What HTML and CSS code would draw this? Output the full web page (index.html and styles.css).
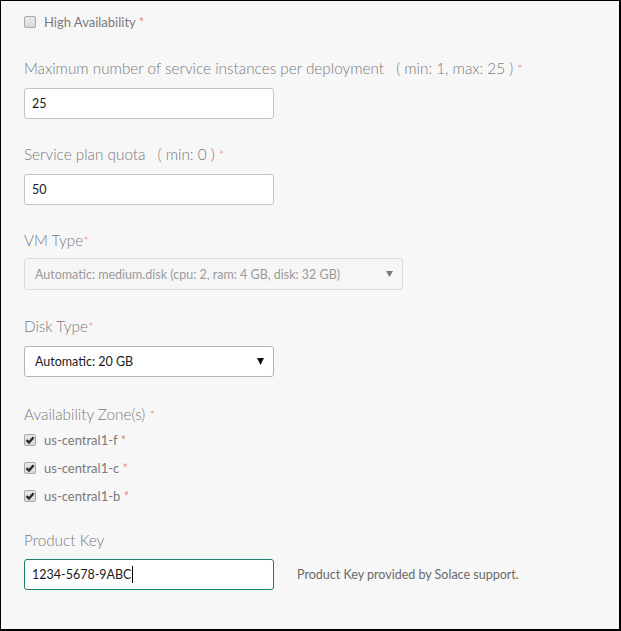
FILE: index.html
```html
<!DOCTYPE html>
<html>
<head>
<meta charset="utf-8">
<link rel="stylesheet" href="styles.css">
</head>
<body>
<div class="frame">
  <div class="check-row top">
    <span class="cb"></span>
    <span class="cb-label">High Availability <span class="req">*</span></span>
  </div>

  <div class="group g1">
    <div class="label">Maximum number of service instances per deployment <span class="hint">( min: 1, max: 25 )</span> <span class="req">*</span></div>
    <div class="input">25</div>
  </div>

  <div class="group">
    <div class="label">Service plan quota <span class="hint">( min: 0 )</span> <span class="req">*</span></div>
    <div class="input">50</div>
  </div>

  <div class="group vm">
    <div class="label">VM Type<span class="req">*</span></div>
    <div class="select disabled wide">
      <span>Automatic: medium.disk (cpu: 2, ram: 4 GB, disk: 32 GB)</span>
      <svg class="arrow" width="7" height="6" viewBox="0 0 7 6"><path d="M0 0H7L3.5 6Z" fill="#7a7a7a"/></svg>
    </div>
  </div>

  <div class="group disk">
    <div class="label">Disk Type<span class="req">*</span></div>
    <div class="select">
      <span>Automatic: 20 GB</span>
      <svg class="arrow" width="7" height="7" viewBox="0 0 7 7"><path d="M0 0H7L3.5 7Z" fill="#111"/></svg>
    </div>
  </div>

  <div class="group zones">
    <div class="label">Availability Zone(s) <span class="req">*</span></div>
    <div class="check-row">
      <span class="cb checked"><svg width="10" height="10" viewBox="0 0 10 10"><path d="M1.5 5.2L4 7.6L8.6 2.2" fill="none" stroke="#2b2b2b" stroke-width="2.4"/></svg></span>
      <span class="cb-label">us-central1-f <span class="req">*</span></span>
    </div>
    <div class="check-row">
      <span class="cb checked"><svg width="10" height="10" viewBox="0 0 10 10"><path d="M1.5 5.2L4 7.6L8.6 2.2" fill="none" stroke="#2b2b2b" stroke-width="2.4"/></svg></span>
      <span class="cb-label">us-central1-c <span class="req">*</span></span>
    </div>
    <div class="check-row">
      <span class="cb checked"><svg width="10" height="10" viewBox="0 0 10 10"><path d="M1.5 5.2L4 7.6L8.6 2.2" fill="none" stroke="#2b2b2b" stroke-width="2.4"/></svg></span>
      <span class="cb-label">us-central1-b <span class="req">*</span></span>
    </div>
  </div>

  <div class="group pk">
    <div class="label">Product Key</div>
    <div class="pk-row">
      <div class="input focused">1234-5678-9ABC<span class="caret"></span></div>
      <span class="help">Product Key provided by Solace support.</span>
    </div>
  </div>
</div>
</body>
</html>
```
FILE: styles.css
```css
html, body {
  margin: 0;
  padding: 0;
}
body {
  font-family: Lato, "Noto Sans", sans-serif;
  background: #fff;
}
.frame {
  box-sizing: border-box;
  width: 621px;
  height: 631px;
  background: #f7f7f7;
  border-style: solid;
  border-color: #000;
  border-width: 1px 2px 2px 1px;
  padding: 7px 0 0 23px;
}
.check-row {
  display: flex;
  align-items: center;
  height: 28px;
}
.cb {
  box-sizing: border-box;
  width: 12px;
  height: 12px;
  border: 1px solid #a9a9a9;
  border-radius: 2px;
  background: linear-gradient(#e9e9e9, #d9d9d9);
  display: flex;
  align-items: center;
  justify-content: center;
  flex: none;
}
.cb svg { display: block; }
.cb-label {
  margin-left: 8px;
  font-size: 13px;
  color: #7a7a7a;
}
.req {
  color: #f08a8a;
  font-size: 13px;
}
.group {
  margin-top: 25px;
}
.group.g1 {
  margin-top: 22px;
}
.label {
  font-size: 15.3px;
  line-height: 20px;
  font-weight: 300;
  color: #7a7a7a;
  margin-bottom: 9px;
  white-space: nowrap;
}
.hint {
  margin-left: 8px;
}
.vm .label {
  margin-bottom: 7px;
}
.group.disk {
  margin-top: 26px;
}
.input {
  box-sizing: border-box;
  width: 250px;
  height: 31px;
  background: #fff;
  border: 1px solid #c4c4c4;
  border-radius: 3px;
  padding: 0 7px;
  display: flex;
  align-items: center;
  font-size: 12.5px;
  color: #1a1a1a;
}
.select {
  box-sizing: border-box;
  width: 250px;
  height: 31px;
  background: #fff;
  border: 1px solid #b4b4b4;
  border-radius: 3px;
  padding: 0 9px 0 10px;
  display: flex;
  align-items: center;
  justify-content: space-between;
  font-size: 12.5px;
  color: #1a1a1a;
}
.select.wide {
  width: 379px;
  height: 32px;
}
.select.disabled {
  background: #f6f6f6;
  border-color: #dadada;
  color: #9a9a9a;
}
.group.zones {
  margin-top: 27px;
}
.zones .label {
  margin-bottom: 1px;
}
.group.pk {
  margin-top: 20px;
}
.pk-row {
  display: flex;
  align-items: center;
}
.input.focused {
  border-color: #18806c;
  height: 31px;
}
.caret {
  display: inline-block;
  width: 1px;
  height: 17px;
  background: #000;
  margin-left: 1px;
}
.help {
  margin-left: 23px;
  font-size: 12.5px;
  color: #6a6a6a;
}
```
